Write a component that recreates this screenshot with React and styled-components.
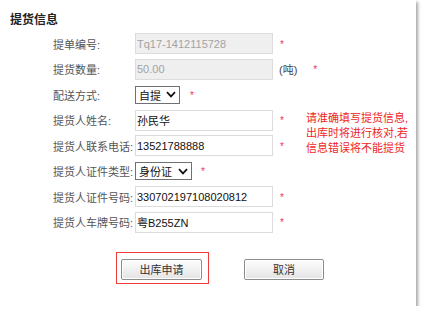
import React from 'react'
import styled, { createGlobalStyle } from 'styled-components'

const GlobalStyle = createGlobalStyle`
  body {
    margin: 0;
    background: #fff;
    font-family: "Liberation Sans", "Noto Sans CJK SC", sans-serif;
  }
`

const Panel = styled.div`
  width: 416px;
  height: 306px;
  background: #fff;
  box-shadow: 2px 2px 3px rgba(0, 0, 0, 0.35);
  box-sizing: border-box;
  padding-top: 13px;
`

const Title = styled.h3`
  margin: 0 0 6px 10px;
  font-size: 12px;
  line-height: 14px;
  font-weight: bold;
  color: #222;
`

const Form = styled.div`
  display: grid;
  grid-template-columns: 82px 171px 1fr;
  grid-auto-rows: 21px;
  row-gap: 4.5px;
  padding-left: 53px;
`

const Label = styled.label`
  grid-column: 1;
  display: flex;
  align-items: center;
  font-size: 11px;
  color: #555;
  white-space: nowrap;
`

const Field = styled.div`
  grid-column: 2;
  display: flex;
  align-items: center;
  white-space: nowrap;
`

const TextInput = styled.input`
  box-sizing: border-box;
  width: 138px;
  height: 21px;
  margin: 0;
  padding: 0 1px;
  border: 1px solid #dcdcdc;
  outline: none;
  font-family: inherit;
  font-size: 11px;
  color: #111;
  background: ${p => (p.disabled ? '#efefef' : '#fff')};

  &:disabled {
    color: #a3a3a3;
  }
`

const SelectBox = styled.div`
  box-sizing: border-box;
  height: 18px;
  width: ${p => p.$width}px;
  display: flex;
  align-items: center;
  justify-content: space-between;
  padding: 0 3px 0 3px;
  border: 1px solid #707070;
  font-size: 11px;
  color: #111;
`

const Required = styled.span`
  color: #f0335a;
  font-size: 10px;
  margin-left: ${p => p.$gap || 7}px;
  line-height: 1;
  position: relative;
  top: 1px;
`

const Unit = styled.span`
  margin-left: 6px;
  font-size: 11px;
  color: #444;
`

const Note = styled.div`
  grid-column: 3;
  grid-row: 4 / span 3;
  align-self: start;
  padding-top: 1px;
  font-size: 11px;
  line-height: 15px;
  color: #f01e1e;
`

const ButtonBar = styled.div`
  display: flex;
  align-items: flex-start;
  gap: 35px;
  margin-top: 19px;
  padding-left: 116px;
`

const Highlight = styled.div`
  border: 1px solid #f03c3c;
  padding: 6px 6px 3px 4px;
`

const Button = styled.button`
  box-sizing: border-box;
  width: ${p => p.$width || 81}px;
  height: 21px;
  margin: ${p => p.$offset || 0}px 0 0;
  padding: 0;
  border: 1px solid #8c8c8c;
  border-radius: 2px;
  background: linear-gradient(#fdfdfd, #e4e4e4);
  box-shadow: inset 0 0 0 1px #fff;
  font-family: inherit;
  font-size: 11px;
  color: #333;
`

const Chevron = () => (
  <svg width="10" height="7" viewBox="0 0 10 7">
    <path d="M1 1.2 L5 5.4 L9 1.2" fill="none" stroke="#111" strokeWidth="1.7" />
  </svg>
)

const Row = ({ label, children }) => (
  <>
    <Label>{label}:</Label>
    <Field>{children}</Field>
  </>
)

export default function App() {
  return (
    <>
      <GlobalStyle />
      <Panel>
        <Title>提货信息</Title>
        <Form>
          <Row label="提单编号">
            <TextInput disabled defaultValue="Tq17-1412115728" />
            <Required>*</Required>
          </Row>
          <Row label="提货数量">
            <TextInput disabled defaultValue="50.00" />
            <Unit>(吨)</Unit>
            <Required $gap={16}>*</Required>
          </Row>
          <Row label="配送方式">
            <SelectBox $width={45}>
              自提
              <Chevron />
            </SelectBox>
            <Required $gap={10}>*</Required>
          </Row>
          <Row label="提货人姓名">
            <TextInput defaultValue="孙民华" />
            <Required>*</Required>
          </Row>
          <Row label="提货人联系电话">
            <TextInput defaultValue="13521788888" />
            <Required>*</Required>
          </Row>
          <Row label="提货人证件类型">
            <SelectBox $width={57}>
              身份证
              <Chevron />
            </SelectBox>
            <Required $gap={9}>*</Required>
          </Row>
          <Row label="提货人证件号码">
            <TextInput defaultValue="330702197108020812" />
            <Required>*</Required>
          </Row>
          <Row label="提货人车牌号码">
            <TextInput defaultValue="粤B255ZN" />
            <Required>*</Required>
          </Row>
          <Note>
            请准确填写提货信息,
            <br />
            出库时将进行核对,若
            <br />
            信息错误将不能提货
          </Note>
        </Form>
        <ButtonBar>
          <Highlight>
            <Button>出库申请</Button>
          </Highlight>
          <Button $width={80} $offset={7}>取消</Button>
        </ButtonBar>
      </Panel>
    </>
  )
}
